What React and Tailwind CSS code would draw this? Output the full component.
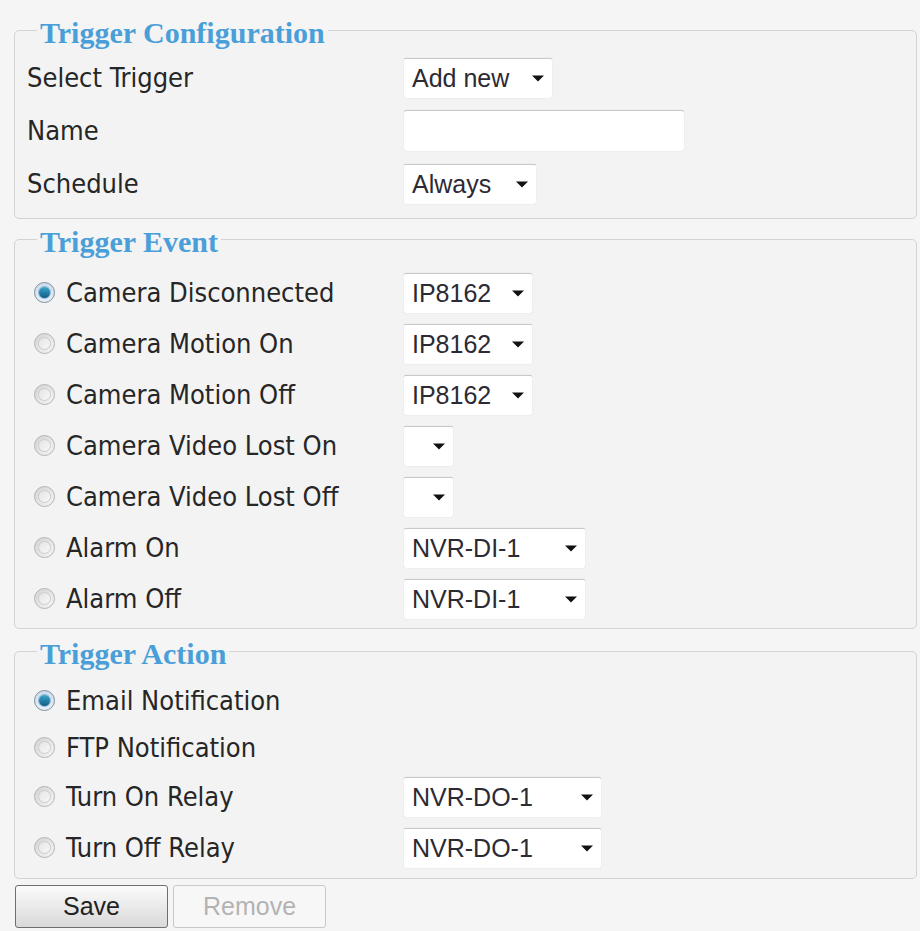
import React from "react";

const labelFont = { fontFamily: '"DejaVu Sans Condensed", "DejaVu Sans", sans-serif' };

function Legend({ children }) {
  return (
    <legend
      className="ml-[10px] px-[3px] pt-[6px] text-[30px] leading-[30px] font-bold text-[#4a9fd8]"
      style={{ fontFamily: '"Liberation Serif", serif' }}
    >
      {children}
    </legend>
  );
}

function Arrow() {
  return (
    <svg width="12" height="7" viewBox="0 0 12 7" className="shrink-0">
      <path d="M0 0.5 L12 0.5 L6 6.5 Z" fill="#111" />
    </svg>
  );
}

function Select({ value, width }) {
  return (
    <div
      className={`flex items-center justify-between h-[40px] bg-white border-t border-[#c8c8c8] rounded-[2px] pl-[8px] pr-[8px] text-[25px] text-[#2c2a33] shadow-[0_0_1px_rgba(0,0,0,0.2)] ${width}`}
      style={{ fontFamily: '"Liberation Sans", Arial, sans-serif' }}
    >
      <span className="leading-none">{value}</span>
      <Arrow />
    </div>
  );
}

function Radio({ checked }) {
  if (checked) {
    return (
      <span className="ml-[7px] mr-[11px] flex items-center justify-center w-[21px] h-[21px] rounded-full border border-[#7f8c99] bg-gradient-to-b from-[#c9dced] to-[#e8f1f8] shrink-0">
        <span className="w-[11px] h-[11px] rounded-full bg-gradient-to-b from-[#3aa6cc] to-[#115d86] shadow-[0_0_0_1px_#8fb3d1]" />
      </span>
    );
  }
  return (
    <span className="ml-[7px] mr-[11px] flex items-center justify-center w-[21px] h-[21px] rounded-full border border-[#b3b3b3] bg-gradient-to-br from-[#d2d2d2] to-[#f7f7f7] shrink-0">
      <span className="w-[13px] h-[13px] rounded-full border border-[#cdcdcd] bg-gradient-to-br from-[#e4e4e4] to-[#f8f8f8]" />
    </span>
  );
}

function Row({ label, control, height = "h-[53px]" }) {
  return (
    <div className={`flex items-center ${height}`}>
      <div className="w-[377px] text-[27px] text-[#262626] leading-none" style={labelFont}>
        {label}
      </div>
      {control}
    </div>
  );
}

function RadioRow({ label, checked, control, height = "h-[51px]" }) {
  return (
    <div className={`flex items-center ${height}`}>
      <div className="w-[377px] flex items-center text-[27px] text-[#262626] leading-none" style={labelFont}>
        <Radio checked={checked} />
        <span>{label}</span>
      </div>
      {control}
    </div>
  );
}

export default function App() {
  return (
    <div className="min-h-[931px] w-[920px] bg-[#f5f5f5] pl-[14px] pr-[3px] pt-[12px]">
      <fieldset className="border border-[#d3d3d3] rounded-[5px] pl-[12px] pb-[8px] bg-[#f3f3f3]">
        <Legend>Trigger Configuration</Legend>
        <div className="pt-[3px]">
          <Row label="Select Trigger" control={<Select value="Add new" width="w-[148px]" />} />
          <Row
            label="Name"
            control={
              <div className="w-[280px] h-[41px] bg-white border-t border-[#c8c8c8] rounded-[3px] shadow-[0_0_1px_rgba(0,0,0,0.2)]" />
            }
          />
          <Row label="Schedule" control={<Select value="Always" width="w-[132px]" />} />
        </div>
      </fieldset>

      <fieldset className="mt-[2px] border border-[#d3d3d3] rounded-[5px] pl-[12px] pb-[4px] bg-[#f3f3f3]">
        <Legend>Trigger Event</Legend>
        <div className="pt-[10px]">
          <RadioRow label="Camera Disconnected" checked control={<Select value="IP8162" width="w-[128px]" />} />
          <RadioRow label="Camera Motion On" control={<Select value="IP8162" width="w-[128px]" />} />
          <RadioRow label="Camera Motion Off" control={<Select value="IP8162" width="w-[128px]" />} />
          <RadioRow label="Camera Video Lost On" control={<Select value="" width="w-[49px]" />} />
          <RadioRow label="Camera Video Lost Off" control={<Select value="" width="w-[49px]" />} />
          <RadioRow label="Alarm On" control={<Select value="NVR-DI-1" width="w-[181px]" />} />
          <RadioRow label="Alarm Off" control={<Select value="NVR-DI-1" width="w-[181px]" />} />
        </div>
      </fieldset>

      <fieldset className="mt-[4px] border border-[#d3d3d3] rounded-[5px] pl-[12px] pb-[5px] bg-[#f3f3f3]">
        <Legend>Trigger Action</Legend>
        <div className="pt-[8px]">
          <RadioRow label="Email Notification" checked height="h-[47px]" />
          <RadioRow label="FTP Notification" height="h-[47px]" />
          <RadioRow label="Turn On Relay" control={<Select value="NVR-DO-1" width="w-[197px]" />} />
          <RadioRow label="Turn Off Relay" control={<Select value="NVR-DO-1" width="w-[197px]" />} />
        </div>
      </fieldset>

      <div
        className="mt-[6px] flex gap-[5px] ml-[1px] text-[25px]"
        style={{ fontFamily: '"Liberation Sans", Arial, sans-serif' }}
      >
        <button className="w-[153px] h-[43px] rounded-[3px] border border-[#6e6e6e] bg-gradient-to-b from-[#fbfbfb] to-[#d9d9d9] text-[#222]">
          Save
        </button>
        <button className="w-[153px] h-[43px] rounded-[3px] border border-[#c9c9c9] bg-[#f7f7f7] text-[#b3b3b3]">
          Remove
        </button>
      </div>
    </div>
  );
}
